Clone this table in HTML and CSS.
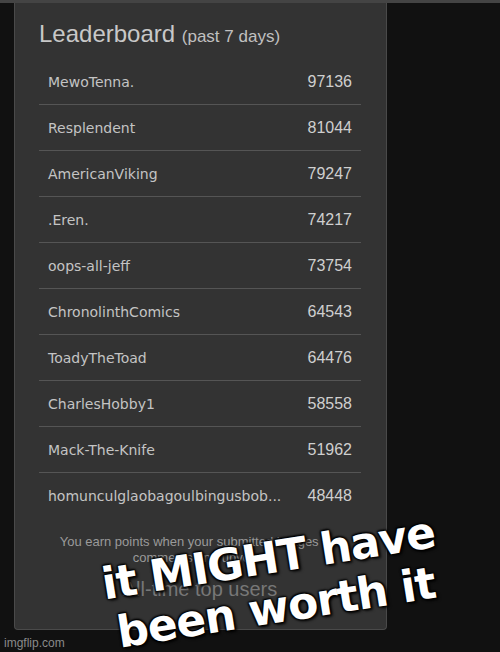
FILE: index.html
```html
<html>
<head>
<title>Leaderboard</title>
<link rel="stylesheet" href="styles.css">
</head>
<body>

<div class="topstrip"></div>

<div class="board">
	<h2 class="board_title">Leaderboard <span class="board_sub">(past 7 days)</span></h2>

	<div class="board_list">
		<div class="board_row"><span class="row_name">MewoTenna.</span><span class="row_pts">97136</span></div>
		<div class="board_row"><span class="row_name">Resplendent</span><span class="row_pts">81044</span></div>
		<div class="board_row"><span class="row_name">AmericanViking</span><span class="row_pts">79247</span></div>
		<div class="board_row"><span class="row_name">.Eren.</span><span class="row_pts">74217</span></div>
		<div class="board_row"><span class="row_name">oops-all-jeff</span><span class="row_pts">73754</span></div>
		<div class="board_row"><span class="row_name">ChronolinthComics</span><span class="row_pts">64543</span></div>
		<div class="board_row"><span class="row_name">ToadyTheToad</span><span class="row_pts">64476</span></div>
		<div class="board_row"><span class="row_name">CharlesHobby1</span><span class="row_pts">58558</span></div>
		<div class="board_row"><span class="row_name">Mack-The-Knife</span><span class="row_pts">51962</span></div>
		<div class="board_row last"><span class="row_name">homunculglaobagoulbingusbob...</span><span class="row_pts">48448</span></div>
	</div>

	<p class="board_note">You earn points when your submitted images get<br>comments and upvotes</p>
	<a class="board_link">All-time top users</a>
</div>

<div class="caption">it MIGHT have<br>been worth it</div>
<div class="watermark">imgflip.com</div>

</body>
</html>
```

FILE: styles.css
```css
body { margin: 0; background-color: #111111; width: 500px; height: 652px; overflow: hidden; position: relative; font-family: "Liberation Sans", Arial, sans-serif; }
.topstrip { height: 3px; background-color: #444444; }

.board {
	width: 322px; height: 626px;
	margin-left: 14px;
	padding: 0 25px 0 24px;
	background-color: #333333;
	border: 1px solid #4a4a4a; border-top: none;
	border-radius: 0 0 4px 4px;
	display: flex; flex-direction: column;
}
.board_title { margin: 16px 0 0 0; height: 40px; font-size: 24px; line-height: 30px; font-weight: normal; color: #c8c8c8; }
.board_sub { font-size: 17px; color: #c0c0c0; }

.board_list { display: flex; flex-direction: column; }
.board_row {
	height: 45px;
	border-bottom: 1px solid #555555;
	display: flex; align-items: center; justify-content: space-between;
	padding: 0 9px;
}
.board_row.last { border-bottom: none; }
.row_name { font-family: "DejaVu Sans", Tahoma, sans-serif; font-size: 14px; color: #c4c4c4; }
.row_pts { font-size: 16px; color: #cfcfcf; }

.board_note { margin: 16px 0 0 0; text-align: center; font-size: 13px; line-height: 16px; color: #9a9a9a; }
.board_link { margin-top: 12px; text-align: center; font-size: 20px; color: #777777; }

.caption {
	position: absolute; left: 104px; top: 533px;
	font-family: "DejaVu Sans", sans-serif; font-weight: bold;
	font-size: 44px; line-height: 50px; letter-spacing: -1px; color: #ffffff;
	text-align: center;
	transform: rotate(-9deg);
	text-shadow: 2px 2px 3px #000, -1px -1px 2px #000, 1px -1px 2px #000, -1px 1px 2px #000;
}
.watermark { position: absolute; left: 4px; bottom: 2px; font-size: 12px; color: #8a8a8a; }
```
